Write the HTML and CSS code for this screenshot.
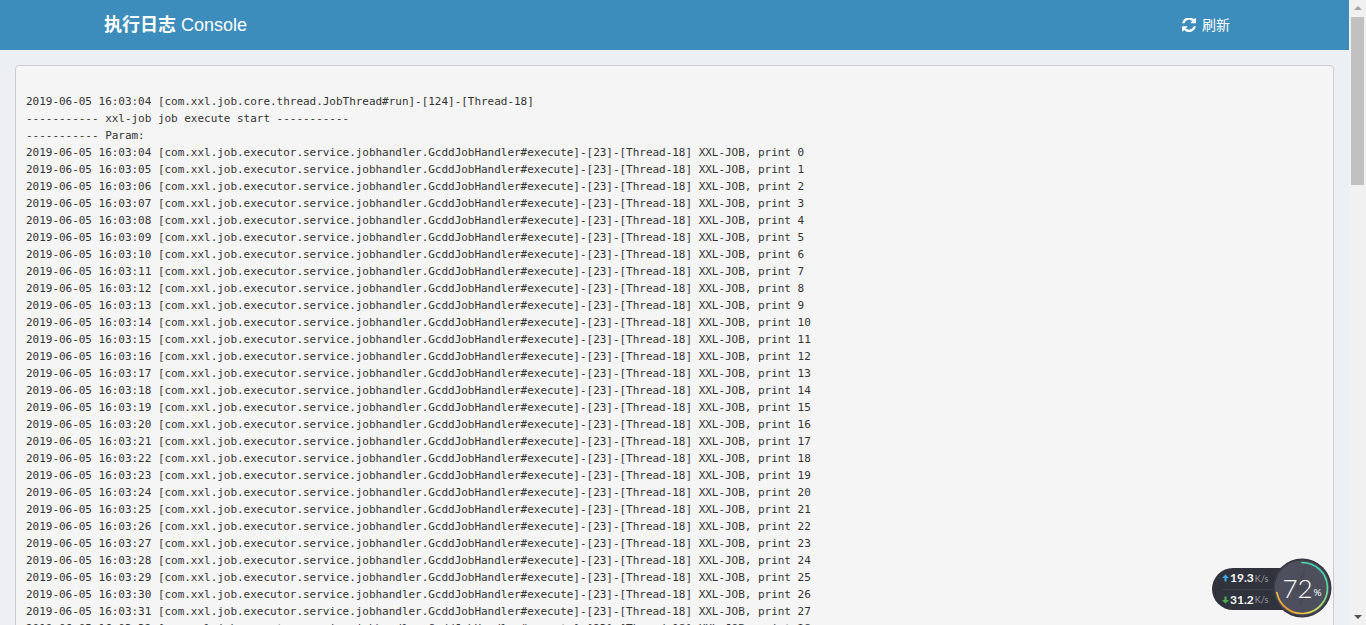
FILE: index.html
```html
<!DOCTYPE html>
<html lang="zh">
<head>
<meta charset="utf-8">
<title>执行日志 Console</title>
<link rel="stylesheet" href="styles.css">
</head>
<body>
<div class="app">
  <div class="page">
    <header class="topbar">
      <h1 class="title"><b>执行日志</b> Console</h1>
      <a class="refresh">
        <svg class="refresh-icon" viewBox="0 0 1536 1536" aria-hidden="true"><path fill="#fff" d="M1511 928q0 5-1 7-64 268-268 434.500t-478 166.500q-146 0-282.500-55t-243.500-157l-129 129q-19 19-45 19t-45-19-19-45v-448q0-26 19-45t45-19h448q26 0 45 19t19 45-19 45l-137 137q71 66 161 102t187 36q134 0 250-65t186-179q11-17 53-117 8-23 30-23h192q13 0 22.500 9.500t9.500 22.500zM1536 64v448q0 26-19 45t-45 19h-448q-26 0-45-19t-19-45 19-45l138-138q-148-137-349-137-134 0-250 65t-186 179q-11 17-53 117-8 23-30 23h-199q-13 0-22.500-9.500t-9.500-22.500v-7q65-268 270-434.500t480-166.500q146 0 284 55.500t245 156.500l130-129q19-19 45-19t45 19 19 45z"/></svg>
        <span>刷新</span>
      </a>
    </header>
    <main class="content">
<pre class="log">

2019-06-05 16:03:04 [com.xxl.job.core.thread.JobThread#run]-[124]-[Thread-18]
----------- xxl-job job execute start -----------
----------- Param:
2019-06-05 16:03:04 [com.xxl.job.executor.service.jobhandler.GcddJobHandler#execute]-[23]-[Thread-18] XXL-JOB, print 0
2019-06-05 16:03:05 [com.xxl.job.executor.service.jobhandler.GcddJobHandler#execute]-[23]-[Thread-18] XXL-JOB, print 1
2019-06-05 16:03:06 [com.xxl.job.executor.service.jobhandler.GcddJobHandler#execute]-[23]-[Thread-18] XXL-JOB, print 2
2019-06-05 16:03:07 [com.xxl.job.executor.service.jobhandler.GcddJobHandler#execute]-[23]-[Thread-18] XXL-JOB, print 3
2019-06-05 16:03:08 [com.xxl.job.executor.service.jobhandler.GcddJobHandler#execute]-[23]-[Thread-18] XXL-JOB, print 4
2019-06-05 16:03:09 [com.xxl.job.executor.service.jobhandler.GcddJobHandler#execute]-[23]-[Thread-18] XXL-JOB, print 5
2019-06-05 16:03:10 [com.xxl.job.executor.service.jobhandler.GcddJobHandler#execute]-[23]-[Thread-18] XXL-JOB, print 6
2019-06-05 16:03:11 [com.xxl.job.executor.service.jobhandler.GcddJobHandler#execute]-[23]-[Thread-18] XXL-JOB, print 7
2019-06-05 16:03:12 [com.xxl.job.executor.service.jobhandler.GcddJobHandler#execute]-[23]-[Thread-18] XXL-JOB, print 8
2019-06-05 16:03:13 [com.xxl.job.executor.service.jobhandler.GcddJobHandler#execute]-[23]-[Thread-18] XXL-JOB, print 9
2019-06-05 16:03:14 [com.xxl.job.executor.service.jobhandler.GcddJobHandler#execute]-[23]-[Thread-18] XXL-JOB, print 10
2019-06-05 16:03:15 [com.xxl.job.executor.service.jobhandler.GcddJobHandler#execute]-[23]-[Thread-18] XXL-JOB, print 11
2019-06-05 16:03:16 [com.xxl.job.executor.service.jobhandler.GcddJobHandler#execute]-[23]-[Thread-18] XXL-JOB, print 12
2019-06-05 16:03:17 [com.xxl.job.executor.service.jobhandler.GcddJobHandler#execute]-[23]-[Thread-18] XXL-JOB, print 13
2019-06-05 16:03:18 [com.xxl.job.executor.service.jobhandler.GcddJobHandler#execute]-[23]-[Thread-18] XXL-JOB, print 14
2019-06-05 16:03:19 [com.xxl.job.executor.service.jobhandler.GcddJobHandler#execute]-[23]-[Thread-18] XXL-JOB, print 15
2019-06-05 16:03:20 [com.xxl.job.executor.service.jobhandler.GcddJobHandler#execute]-[23]-[Thread-18] XXL-JOB, print 16
2019-06-05 16:03:21 [com.xxl.job.executor.service.jobhandler.GcddJobHandler#execute]-[23]-[Thread-18] XXL-JOB, print 17
2019-06-05 16:03:22 [com.xxl.job.executor.service.jobhandler.GcddJobHandler#execute]-[23]-[Thread-18] XXL-JOB, print 18
2019-06-05 16:03:23 [com.xxl.job.executor.service.jobhandler.GcddJobHandler#execute]-[23]-[Thread-18] XXL-JOB, print 19
2019-06-05 16:03:24 [com.xxl.job.executor.service.jobhandler.GcddJobHandler#execute]-[23]-[Thread-18] XXL-JOB, print 20
2019-06-05 16:03:25 [com.xxl.job.executor.service.jobhandler.GcddJobHandler#execute]-[23]-[Thread-18] XXL-JOB, print 21
2019-06-05 16:03:26 [com.xxl.job.executor.service.jobhandler.GcddJobHandler#execute]-[23]-[Thread-18] XXL-JOB, print 22
2019-06-05 16:03:27 [com.xxl.job.executor.service.jobhandler.GcddJobHandler#execute]-[23]-[Thread-18] XXL-JOB, print 23
2019-06-05 16:03:28 [com.xxl.job.executor.service.jobhandler.GcddJobHandler#execute]-[23]-[Thread-18] XXL-JOB, print 24
2019-06-05 16:03:29 [com.xxl.job.executor.service.jobhandler.GcddJobHandler#execute]-[23]-[Thread-18] XXL-JOB, print 25
2019-06-05 16:03:30 [com.xxl.job.executor.service.jobhandler.GcddJobHandler#execute]-[23]-[Thread-18] XXL-JOB, print 26
2019-06-05 16:03:31 [com.xxl.job.executor.service.jobhandler.GcddJobHandler#execute]-[23]-[Thread-18] XXL-JOB, print 27
2019-06-05 16:03:32 [com.xxl.job.executor.service.jobhandler.GcddJobHandler#execute]-[23]-[Thread-18] XXL-JOB, print 28
</pre>
    </main>
  </div>
  <div class="scrollbar" aria-hidden="true">
    <span class="arrow arrow-up"></span>
    <div class="track"><div class="thumb"></div></div>
    <span class="arrow arrow-down"></span>
  </div>
</div>
<aside class="speed-widget">
  <div class="speed-pill">
    <div class="speed-row"><svg class="speed-arrow" viewBox="0 0 8 8"><path fill="#3fa9e8" d="M4 0 8 4H5.200V8H2.800V4H0z"/></svg><b>19.3</b><small>K/s</small></div>
    <div class="speed-row"><svg class="speed-arrow" viewBox="0 0 8 8"><path fill="#4caf50" d="M4 8 8 4H5.200V0H2.800V4H0z"/></svg><b>31.2</b><small>K/s</small></div>
  </div>
  <div class="gauge">
    <svg class="gauge-ring" viewBox="0 0 60 60">
      <defs>
        <linearGradient id="ring-grad" x1="0.800" y1="0" x2="0.100" y2="0.850">
          <stop offset="0" stop-color="#2fd4b8"/>
          <stop offset="0.450" stop-color="#8fe080"/>
          <stop offset="0.800" stop-color="#f0d850"/>
          <stop offset="1" stop-color="#f0a030"/>
        </linearGradient>
      </defs>
      <circle cx="30" cy="30" r="29.500" fill="#353741"/>
      <circle cx="30" cy="30" r="27.500" fill="#4d505c"/>
      <path d="M33 10 22 33h7l-2 17 11-23h-7z" fill="#474a55"/>
      <path d="M30 4.500A25.500 25.500 0 1 1 4.900 34.500" fill="none" stroke="url(#ring-grad)" stroke-width="1.600" stroke-linecap="round"/>
    </svg>
    <div class="gauge-text">72<small>%</small></div>
  </div>
</aside>
</body>
</html>
```

FILE: styles.css
```css
* { box-sizing: border-box; }
html, body { margin: 0; height: 100%; }
body {
  overflow: hidden;
  background: #ecf0f5;
  font-family: "Liberation Sans", "Noto Sans CJK SC", sans-serif;
}
.app { display: flex; height: 100vh; }
.page { flex: 1; min-width: 0; display: flex; flex-direction: column; overflow: hidden; }
.topbar {
  flex: none;
  height: 50px;
  background: #3c8dbc;
  color: #fff;
  display: flex;
  align-items: center;
  justify-content: space-between;
  padding: 0 119px 0 104px;
}
.title { margin: 0; font-size: 18px; font-weight: 400; line-height: 50px; }
.title b { font-weight: 700; }
.refresh { display: flex; align-items: center; gap: 6px; font-size: 14px; line-height: 16px; color: #fff; margin-top: -1px; }
.refresh-icon { width: 14px; height: 14px; display: block; margin-top: 1px; }
.content { flex: 1; min-height: 0; padding: 15px 15px 0; overflow: hidden; }
.log {
  margin: 0;
  padding: 9.500px 10px;
  background: #f5f5f5;
  border: 1px solid #ccc;
  border-radius: 4px;
  color: #333;
  font-family: "DejaVu Sans Mono", monospace;
  font-size: 11px;
  letter-spacing: -0.028px;
  line-height: 17px;
  white-space: pre;
  min-height: 700px;
  overflow: hidden;
}
.scrollbar { flex: none; width: 17px; background: #f1f1f1; display: flex; flex-direction: column; align-items: center; }
.arrow { flex: none; width: 0; height: 0; border-left: 4px solid transparent; border-right: 4px solid transparent; }
.arrow-up { margin: 6px 0 7px; border-bottom: 4px solid #a3a3a3; }
.arrow-down { margin: 7px 0 6px; border-top: 4px solid #505050; }
.track { flex: 1; width: 100%; padding: 0 2px; }
.thumb { height: 168px; background: #c1c1c1; }
.speed-widget {
  position: absolute;
  left: 1212px;
  top: 558px;
  width: 120px;
  height: 61px;
}
.speed-pill {
  position: absolute;
  left: 0;
  top: 10px;
  width: 90px;
  height: 42px;
  border-radius: 21px;
  background: #30323c;
  color: #fff;
  display: flex;
  flex-direction: column;
  padding-left: 10px;
}
.speed-row { flex: 1; display: flex; align-items: center; font-size: 11px; line-height: 1; }
.speed-row + .speed-row { border-top: 1px solid #3d3f49; }
.speed-arrow { width: 7px; height: 8px; display: block; margin-right: 1px; }
.speed-row b { font-weight: 700; font-family: "Lato", sans-serif; font-size: 12px; }
.speed-row small { font-size: 9px; color: #9a9ca5; margin-left: 1px; font-family: "Lato", sans-serif; }
.gauge { position: absolute; left: 60px; top: 0; width: 60px; height: 60px; }
.gauge-ring { width: 60px; height: 60px; display: block; }
.gauge-text {
  position: absolute;
  inset: 0;
  display: flex;
  align-items: center;
  justify-content: center;
  color: #fff;
  font-family: "Lato", sans-serif;
  font-weight: 300;
  font-size: 26px;
  line-height: 1;
}
.gauge-text small { font-size: 10px; font-weight: 400; margin-top: 8px; margin-left: 1px; }
```
